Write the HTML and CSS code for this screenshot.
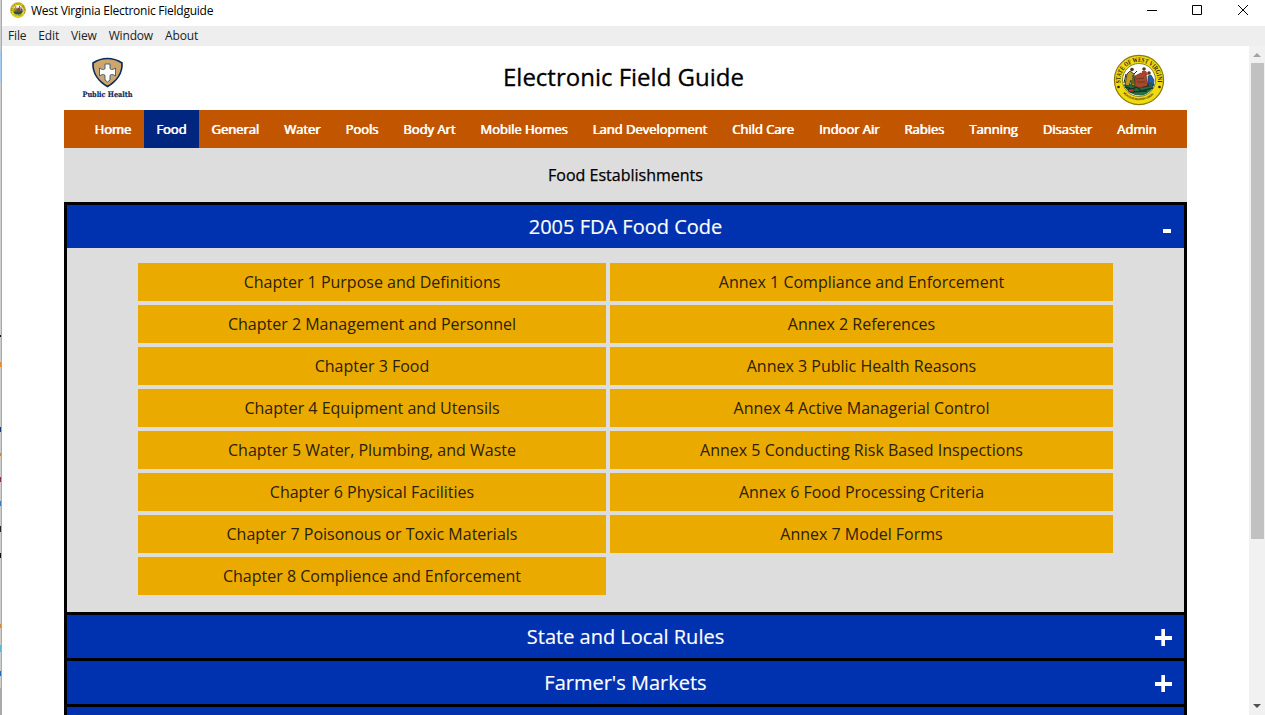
FILE: index.html
```html
<!DOCTYPE html>
<html lang="en">
<head>
<meta charset="utf-8">
<title>West Virginia Electronic Fieldguide</title>
<link rel="stylesheet" href="styles.css">
</head>
<body>
<svg class="defs" width="0" height="0">
  <defs>
    <symbol id="seal" viewBox="0 0 52 52">
      <circle cx="26" cy="26" r="24.600" fill="#f0da10" stroke="#8d7a08" stroke-width="1.200"/>
      <circle cx="26" cy="26" r="16.500" fill="#fff" stroke="#746b18" stroke-width=".8"/>
      <path d="M10.500 31q4-3 8-1l16-1q5-2 7 1-3 9-12 11.500-13 1-19-10.500z" fill="#247044"/>
      <path d="M12 33l7 2 5-2 4 4 12-3M17 38l17-1" stroke="#173824" stroke-width="1.500" fill="none"/>
      <path d="M22 22l6-3 5 2 2 11-8 2-6-2z" fill="#a5482c" stroke="#592b19" stroke-width=".7"/>
      <path d="M23 25l8-1M24 28h8" stroke="#62311f" stroke-width=".8"/>
      <path d="M14 20l3-3 4 3 1 11-3 1-1-6-2 6-4-1z" fill="#bb9d1c" stroke="#34351b" stroke-width=".9"/>
      <circle cx="19" cy="15.500" r="1.800" fill="#403723"/>
      <path d="M13 20l-2 9M21 20l3-3M20 21v9" stroke="#242719" stroke-width="1"/>
      <circle cx="31" cy="15" r="1.800" fill="#563728"/>
      <path d="M29 17h4l2 4-6 1z" fill="#b13e25"/>
      <path d="M35 22l3-1 3 5-1 6-3-4-2 4z" fill="#235cab" stroke="#252a3d" stroke-width=".6"/>
      <circle cx="36" cy="19" r="1.800" fill="#50382a"/>
      <path d="M15 35h6v3h-5zM30 33l8-1" fill="#b93a25" stroke="#292719" stroke-width=".7"/>
      <path id="sealTop" d="M7.600 30A18.700 18.700 0 1 1 44.400 30" fill="none"/>
      <path id="sealBottom" d="M7.500 36A21.800 21.800 0 0 0 44.500 36" fill="none"/>
      <text class="seal-name"><textPath href="#sealTop" startOffset="1" textLength="66" lengthAdjust="spacingAndGlyphs">STATE OF WEST VIRGINIA</textPath></text>
      <text class="seal-motto"><textPath href="#sealBottom" startOffset="4" textLength="34">MONTANI SEMPER LIBERI</textPath></text>
      <circle cx="5.500" cy="33" r="1.300" fill="#29230a"/>
      <circle cx="46.500" cy="33" r="1.300" fill="#29230a"/>
    </symbol>
  </defs>
</svg>
<div class="window">
  <div class="desktop-edge"></div>
  <div class="app">
    <div class="titlebar">
      <svg class="app-icon"><use href="#seal"/></svg>
      <span class="app-title">West Virginia Electronic Fieldguide</span>
      <svg class="controls" width="106" height="20" viewBox="0 0 106 20" fill="none" stroke="#000">
        <path d="M1 10.500h10M46.500 5.500h9v9h-9z"/><path d="M92 5l10 10M102 5L92 15"/>
      </svg>
    </div>
    <div class="menubar"><span>File</span><span>Edit</span><span>View</span><span>Window</span><span>About</span></div>
    <div class="viewport">
      <main class="page">
        <header class="header">
          <svg class="health" width="60" height="50" viewBox="0 0 60 50">
            <path d="M28.500 2.500C33.500 2.500 38.500 4 43 7 43.500 17 37.500 25.500 28.500 30.500 19.500 25.500 13.500 17 14 7 18.500 4 23.500 2.500 28.500 2.500z" fill="#cca66c" stroke="#0d2a5b" stroke-width="1.700"/>
            <path d="M26 8h5v4q0 1.500 1.500 1.500 2.500 0 4-1.500v8q-1.500-1.500-4-1.500-1.500 0-1.500 1.500v4l-2.500 2-2.500-2v-4q0-1.500-1.500-1.500-2.500 0-4 1.500v-8q1.500 1.500 4 1.500 1.500 0 1.500-1.500z" fill="#fff" stroke="#425373" stroke-width=".9"/>
            <text x="3.500" y="41" textLength="50" lengthAdjust="spacingAndGlyphs">Public Health</text>
          </svg>
          <h1>Electronic Field Guide</h1>
          <svg class="seal"><use href="#seal"/></svg>
        </header>
        <nav class="nav">
          <a>Home</a><a class="active">Food</a><a>General</a><a>Water</a><a>Pools</a><a>Body Art</a><a>Mobile Homes</a><a>Land Development</a><a>Child Care</a><a>Indoor Air</a><a>Rabies</a><a>Tanning</a><a>Disaster</a><a>Admin</a>
        </nav>
        <h2>Food Establishments</h2>
        <div class="accordion">
          <section class="panel">
            <h3>2005 FDA Food Code<i class="toggle minus"></i></h3>
            <div class="links">
              <a>Chapter 1 Purpose and Definitions</a><a>Annex 1 Compliance and Enforcement</a>
              <a>Chapter 2 Management and Personnel</a><a>Annex 2 References</a>
              <a>Chapter 3 Food</a><a>Annex 3 Public Health Reasons</a>
              <a>Chapter 4 Equipment and Utensils</a><a>Annex 4 Active Managerial Control</a>
              <a>Chapter 5 Water, Plumbing, and Waste</a><a>Annex 5 Conducting Risk Based Inspections</a>
              <a>Chapter 6 Physical Facilities</a><a>Annex 6 Food Processing Criteria</a>
              <a>Chapter 7 Poisonous or Toxic Materials</a><a>Annex 7 Model Forms</a>
              <a>Chapter 8 Complience and Enforcement</a>
            </div>
          </section>
          <section class="panel"><h3>State and Local Rules<i class="toggle plus"></i></h3></section>
          <section class="panel"><h3>Farmer's Markets<i class="toggle plus"></i></h3></section>
          <section class="panel"><h3></h3></section>
        </div>
      </main>
      <div class="scrollbar">
        <svg width="16" height="17"><path d="M4 11l4-4 4 4z" fill="#a3a3a3"/></svg>
        <div class="thumb"></div>
        <svg class="down" width="16" height="17"><path d="M4 6h8l-4 4z" fill="#505050"/></svg>
      </div>
    </div>
  </div>
</div>
</body>
</html>
```
FILE: styles.css
```css
* { box-sizing: border-box; }
body { margin: 0; background: #fff; font-family: "Open Sans", sans-serif; color: #000; overflow: hidden; }
.defs { position: absolute; }
.window { display: flex; width: 1265px; height: 715px; overflow: hidden; }
.desktop-edge {
  flex: 0 0 2px; border-right: 1px solid #7fb2e5;
  background: linear-gradient(#cfcfcf 0 50px, #a8cdf1 50px 82px, #cfcfcf 82px 335px, #111 335px 337px, #ccc 337px 362px, #e28a32 362px 367px, #ccc 367px 427px, #173f6c 427px 432px, #ccc 432px 453px, #cf8734 453px 456px, #ccc 456px 477px, #8c3040 477px 482px, #ccc 482px 501px, #3979c5 501px 506px, #ccc 506px 526px, #25202b 526px 532px, #ccc 532px 553px, #111 553px 558px, #ccc 558px 624px, #d28a30 624px 628px, #ccc 628px 645px, #65b2df 645px 652px, #ccc 652px 671px, #2468bd 671px 676px, #ccc 676px 688px, #aaa 688px);
}
.app { flex: 1; min-width: 0; display: flex; flex-direction: column; }
.titlebar { display: flex; align-items: flex-start; height: 26px; padding-left: 8px; }
.app-icon { width: 16px; height: 16px; margin-top: 2px; }
.app-title { margin-left: 5px; font: 12px/20px "Open Sans", sans-serif; padding-top: 1px; letter-spacing: -.25px; white-space: nowrap; }
.controls { margin-left: auto; margin-right: 13px; }
.menubar { display: flex; gap: 12px; height: 20px; padding-left: 6px; background: #eee; font-size: 12px; line-height: 20px; letter-spacing: -.16px; color: #222; }
.viewport { display: flex; height: 669px; overflow: hidden; }
.page { width: 1123px; margin-left: 62px; flex: none; }
.header { display: flex; align-items: flex-start; height: 64px; }
.health { margin: 10px 0 0 15px; overflow: visible; }
.health text { font: bold 7.5px "DejaVu Serif", serif; fill: #0d2a5b; stroke: #0d2a5b; stroke-width: .2px; }
h1 { margin: 11px 0 0 364px; width: 241px; font-size: 24px; line-height: 40px; font-weight: 400; white-space: nowrap; -webkit-text-stroke: .3px #000; }
.seal { width: 52px; height: 52px; margin: 7.5px 22px 0 auto; }
.seal-name { font: bold 6.8px "Liberation Serif", serif; fill: #29230a; }
.seal-motto { font: bold 3px "Liberation Sans", sans-serif; fill: #4d430e; }
.nav { display: flex; height: 38px; padding-left: 18px; background: #c15500; color: #fff; font-size: 13px; line-height: 38px; letter-spacing: -.025px; text-shadow: .6px 0 0 #fff; -webkit-text-stroke: .2px #fff; }
.nav a { padding: 0 12.5px; white-space: nowrap; }
.nav .active { background: #00267f; }
h2 { margin: 0; height: 54px; background: #ddd; text-align: center; font-size: 16px; line-height: 54px; font-weight: 400; -webkit-text-stroke: .25px #000; }
.accordion { border: 3px solid #000; border-bottom: 0; background: #ddd; }
.panel + .panel { border-top: 3px solid #000; }
h3 { display: flex; align-items: center; justify-content: center; height: 43px; margin: 0; background: #0032b0; color: #fff; font-size: 20px; font-weight: 400; position: relative; -webkit-text-stroke: .15px #fff; }
.toggle { position: absolute; right: 12px; background: #fff; }
.minus { width: 8px; height: 4px; right: 13px; top: 24px; }
.plus { width: 17px; height: 4px; top: 21px; }
.plus::before { content: ""; position: absolute; left: 6px; top: -7px; width: 4px; height: 17px; background: linear-gradient(90deg, #a8b8e4 1px, #fff 1px); }
.plus::after { content: ""; position: absolute; left: 6px; top: 0; width: 4px; height: 4px; background: #fff; }
.links { display: grid; grid-template-columns: 468px 503px; grid-auto-rows: 38px; gap: 4px; height: 364px; padding: 15px 71px; }
.links a { background: #eaaa00; text-align: center; font-size: 16px; line-height: 38px; color: #2a2106; }
.scrollbar { display: flex; flex-direction: column; width: 16px; height: 669px; margin-left: auto; background: #f1f1f1; }
.thumb { width: 13px; height: 476px; margin-left: 2px; background: #c1c1c1; }
.scrollbar svg { display: block; flex: none; }
.down { margin-top: auto; }
```
